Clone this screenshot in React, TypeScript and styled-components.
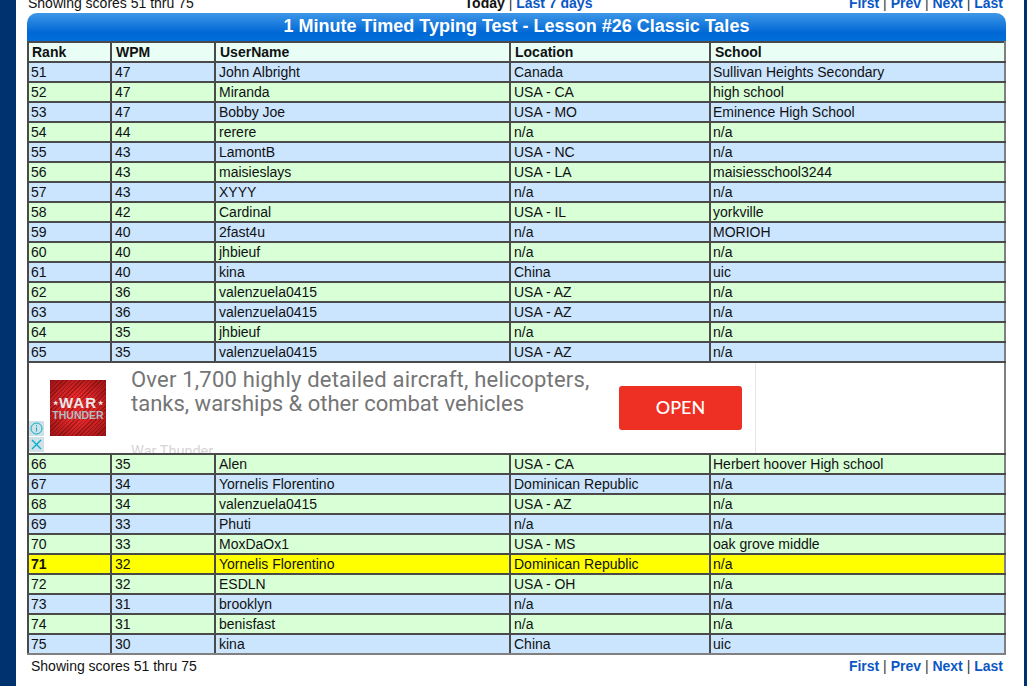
import { createGlobalStyle, styled } from "styled-components";

const GlobalStyle = createGlobalStyle`
  html, body {
    margin: 0;
    height: 100%;
    overflow: hidden;
    background: #00326f;
    font-family: "Liberation Sans", Arial, sans-serif;
    font-size: 14px;
    color: #111;
  }
`;

const Page = styled.div`
  margin: 0 3px 0 16px;
  height: 686px;
  padding: 0 18px 0 11px;
  background: #fff;
  overflow: hidden;
`;

const Pager = styled.div<{ $inset: number; $top: number }>`
  display: grid;
  grid-template-columns: 1fr auto 1fr;
  height: 18px;
  line-height: 18px;
  margin-top: ${(p) => p.$top}px;
  padding: 0 3px 0 ${(p) => p.$inset}px;
`;

const Middle = styled.div`
  padding-left: 26px;
  font-weight: 700;
`;

const Links = styled.div`
  justify-self: end;
  font-weight: 700;
`;

const Sep = styled.span`
  font-weight: 400;
  color: #333;
`;

const PageLink = styled.a`
  color: #0b57c4;
  font-weight: 700;
  text-decoration: none;
`;

const TitleBar = styled.div`
  height: 28px;
  margin-top: 1px;
  line-height: 27px;
  text-align: center;
  color: #fff;
  font-size: 18px;
  font-weight: 700;
  border-radius: 10px 10px 0 0;
  background: linear-gradient(#3f97e6, #0068d6 70%, #006fd8);
`;

const Table = styled.table`
  width: 977px;
  table-layout: fixed;
  border-collapse: collapse;
  border: 2px solid #808080;
  tbody tr:last-child td {
    border-bottom-color: #808080;
  }
`;

const Row = styled.tr<{ $bg: string }>`
  background: ${(p) => p.$bg};
`;

const Head = styled.th`
  height: 18px;
  padding: 0 0 0 4px;
  border: 2px solid #4a4a4a;
  background: #e9fff6;
  color: #111;
  font-size: 14px;
  line-height: 18px;
  text-align: left;
  &:first-child {
    padding-left: 3px;
  }
  &:last-child {
    border-right-color: #808080;
  }
`;

const Cell = styled.td<{ $bold?: boolean }>`
  height: 18px;
  padding: 0 0 0 3px;
  border: 2px solid #4a4a4a;
  font-weight: ${(p) => (p.$bold ? 700 : 400)};
  line-height: 18px;
  white-space: nowrap;
  &:first-child {
    padding-left: 2px;
  }
  &:last-child {
    padding-left: 2px;
    border-right-color: #808080;
  }
`;

const AdCell = styled.td`
  height: 90px;
  padding: 0;
  border: 2px solid #4a4a4a;
  border-right-color: #808080;
  background: #fff;
`;

const Ad = styled.div`
  position: relative;
  display: flex;
  width: 727px;
  height: 90px;
  box-sizing: border-box;
  border-right: 1px solid #e6e6e6;
  overflow: hidden;
  font-family: Roboto, sans-serif;
`;

const Logo = styled.div`
  flex: none;
  width: 56px;
  height: 56px;
  margin: 17px 25px 0 21px;
  display: flex;
  flex-direction: column;
  align-items: center;
  justify-content: center;
  background:
    repeating-linear-gradient(135deg, rgba(90, 0, 0, 0.4) 0 1px, transparent 1px 3px),
    radial-gradient(circle, #e62a2c 30%, #9a1517);
  font-family: "Liberation Sans", sans-serif;
  font-weight: 700;
  color: #e8e8e8;
`;

const LogoWar = styled.span`
  font-size: 15px;
  line-height: 14px;
  letter-spacing: 1px;
  white-space: nowrap;
`;

const LogoStar = styled.span`
  font-size: 6px;
  letter-spacing: 0;
  vertical-align: 3px;
  margin: 0 1px;
`;

const LogoThunder = styled.span`
  font-size: 10.5px;
  line-height: 10px;
  color: #b4bcc2;
`;

const AdCopy = styled.div`
  width: 488px;
  flex: none;
  padding-top: 5px;
  color: #757575;
  font-size: 22px;
  line-height: 24px;
  white-space: nowrap;
`;

const AdLine = styled.div<{ $spacing: number }>`
  letter-spacing: ${(p) => p.$spacing}px;
`;

const AdBrand = styled.div`
  margin-top: 28px;
  color: #d6d6d6;
  font-size: 14.5px;
  line-height: 16px;
`;

const OpenButton = styled.div`
  flex: none;
  width: 123px;
  height: 44px;
  margin-top: 23px;
  border-radius: 3px;
  background: #ee3024;
  color: #fff;
  font-family: Lato, sans-serif;
  font-size: 18px;
  font-weight: 500;
  line-height: 42px;
  text-align: center;
`;

const AdBadges = styled.div`
  position: absolute;
  left: 0;
  bottom: 1px;
  display: flex;
  flex-direction: column;
  gap: 1px;
`;

const AdBadge = styled.div`
  width: 15px;
  height: 15px;
  background: #cfe0e6;
  display: flex;
`;

const COLS = [83, 104, 295, 200, 295];

const HEADERS = ["Rank", "WPM", "UserName", "Location", "School"];

type Score = [number, number, string, string, string];

const FIRST: Score[] = [
  [51, 47, "John Albright", "Canada", "Sullivan Heights Secondary"],
  [52, 47, "Miranda", "USA - CA", "high school"],
  [53, 47, "Bobby Joe", "USA - MO", "Eminence High School"],
  [54, 44, "rerere", "n/a", "n/a"],
  [55, 43, "LamontB", "USA - NC", "n/a"],
  [56, 43, "maisieslays", "USA - LA", "maisiesschool3244"],
  [57, 43, "XYYY", "n/a", "n/a"],
  [58, 42, "Cardinal", "USA - IL", "yorkville"],
  [59, 40, "2fast4u", "n/a", "MORIOH"],
  [60, 40, "jhbieuf", "n/a", "n/a"],
  [61, 40, "kina", "China", "uic"],
  [62, 36, "valenzuela0415", "USA - AZ", "n/a"],
  [63, 36, "valenzuela0415", "USA - AZ", "n/a"],
  [64, 35, "jhbieuf", "n/a", "n/a"],
  [65, 35, "valenzuela0415", "USA - AZ", "n/a"],
];

const SECOND: Score[] = [
  [66, 35, "Alen", "USA - CA", "Herbert hoover High school"],
  [67, 34, "Yornelis Florentino", "Dominican Republic", "n/a"],
  [68, 34, "valenzuela0415", "USA - AZ", "n/a"],
  [69, 33, "Phuti", "n/a", "n/a"],
  [70, 33, "MoxDaOx1", "USA - MS", "oak grove middle"],
  [71, 32, "Yornelis Florentino", "Dominican Republic", "n/a"],
  [72, 32, "ESDLN", "USA - OH", "n/a"],
  [73, 31, "brooklyn", "n/a", "n/a"],
  [74, 31, "benisfast", "n/a", "n/a"],
  [75, 30, "kina", "China", "uic"],
];

const ME = 71;

function rowColor(rank: number) {
  if (rank === ME) return "#ffff00";
  return rank % 2 === 1 ? "#cbe5ff" : "#d8ffd6";
}

function ScoreRow({ score }: { score: Score }) {
  const rank = score[0];
  return (
    <Row $bg={rowColor(rank)}>
      {score.map((value, i) => (
        <Cell key={i} $bold={rank === ME && i === 0}>
          {value}
        </Cell>
      ))}
    </Row>
  );
}

function PagerLinks() {
  return (
    <Links>
      <PageLink>First</PageLink> <Sep>|</Sep> <PageLink>Prev</PageLink> <Sep>|</Sep>{" "}
      <PageLink>Next</PageLink> <Sep>|</Sep> <PageLink>Last</PageLink>
    </Links>
  );
}

function App() {
  return (
    <>
      <GlobalStyle />
      <Page>
        <Pager $inset={1} $top={-6}>
          <span>Showing scores 51 thru 75</span>
          <Middle>
            Today <Sep>|</Sep> <PageLink>Last 7 days</PageLink>
          </Middle>
          <PagerLinks />
        </Pager>
        <TitleBar>1 Minute Timed Typing Test - Lesson #26 Classic Tales</TitleBar>
        <Table>
          <colgroup>
            {COLS.map((w, i) => (
              <col key={i} width={w} />
            ))}
          </colgroup>
          <thead>
            <tr>
              {HEADERS.map((h) => (
                <Head key={h}>{h}</Head>
              ))}
            </tr>
          </thead>
          <tbody>
            {FIRST.map((s) => (
              <ScoreRow key={s[0]} score={s} />
            ))}
            <tr>
              <AdCell colSpan={5}>
                <Ad>
                  <Logo>
                    <LogoWar>
                      <LogoStar>★</LogoStar>WAR<LogoStar>★</LogoStar>
                    </LogoWar>
                    <LogoThunder>THUNDER</LogoThunder>
                  </Logo>
                  <AdCopy>
                    <AdLine $spacing={0.2}>Over 1,700 highly detailed aircraft, helicopters,</AdLine>
                    <AdLine $spacing={0}>tanks, warships &amp; other combat vehicles</AdLine>
                    <AdBrand>War Thunder</AdBrand>
                  </AdCopy>
                  <OpenButton>OPEN</OpenButton>
                  <AdBadges>
                    <AdBadge>
                      <svg width="15" height="15" viewBox="0 0 15 15" fill="none" stroke="#00aecd">
                        <circle cx="7.5" cy="7.5" r="5.5" />
                        <path d="M7.5 6.5v4M7.5 4.2v1.2" />
                      </svg>
                    </AdBadge>
                    <AdBadge>
                      <svg width="15" height="15" viewBox="0 0 15 15" fill="none" stroke="#00aecd" strokeWidth="1.3">
                        <path d="M3 3l9 9M12 3l-9 9" />
                      </svg>
                    </AdBadge>
                  </AdBadges>
                </Ad>
              </AdCell>
            </tr>
            {SECOND.map((s) => (
              <ScoreRow key={s[0]} score={s} />
            ))}
          </tbody>
        </Table>
        <Pager $inset={4} $top={2}>
          <span>Showing scores 51 thru 75</span>
          <span />
          <PagerLinks />
        </Pager>
      </Page>
    </>
  );
}

export default App;
